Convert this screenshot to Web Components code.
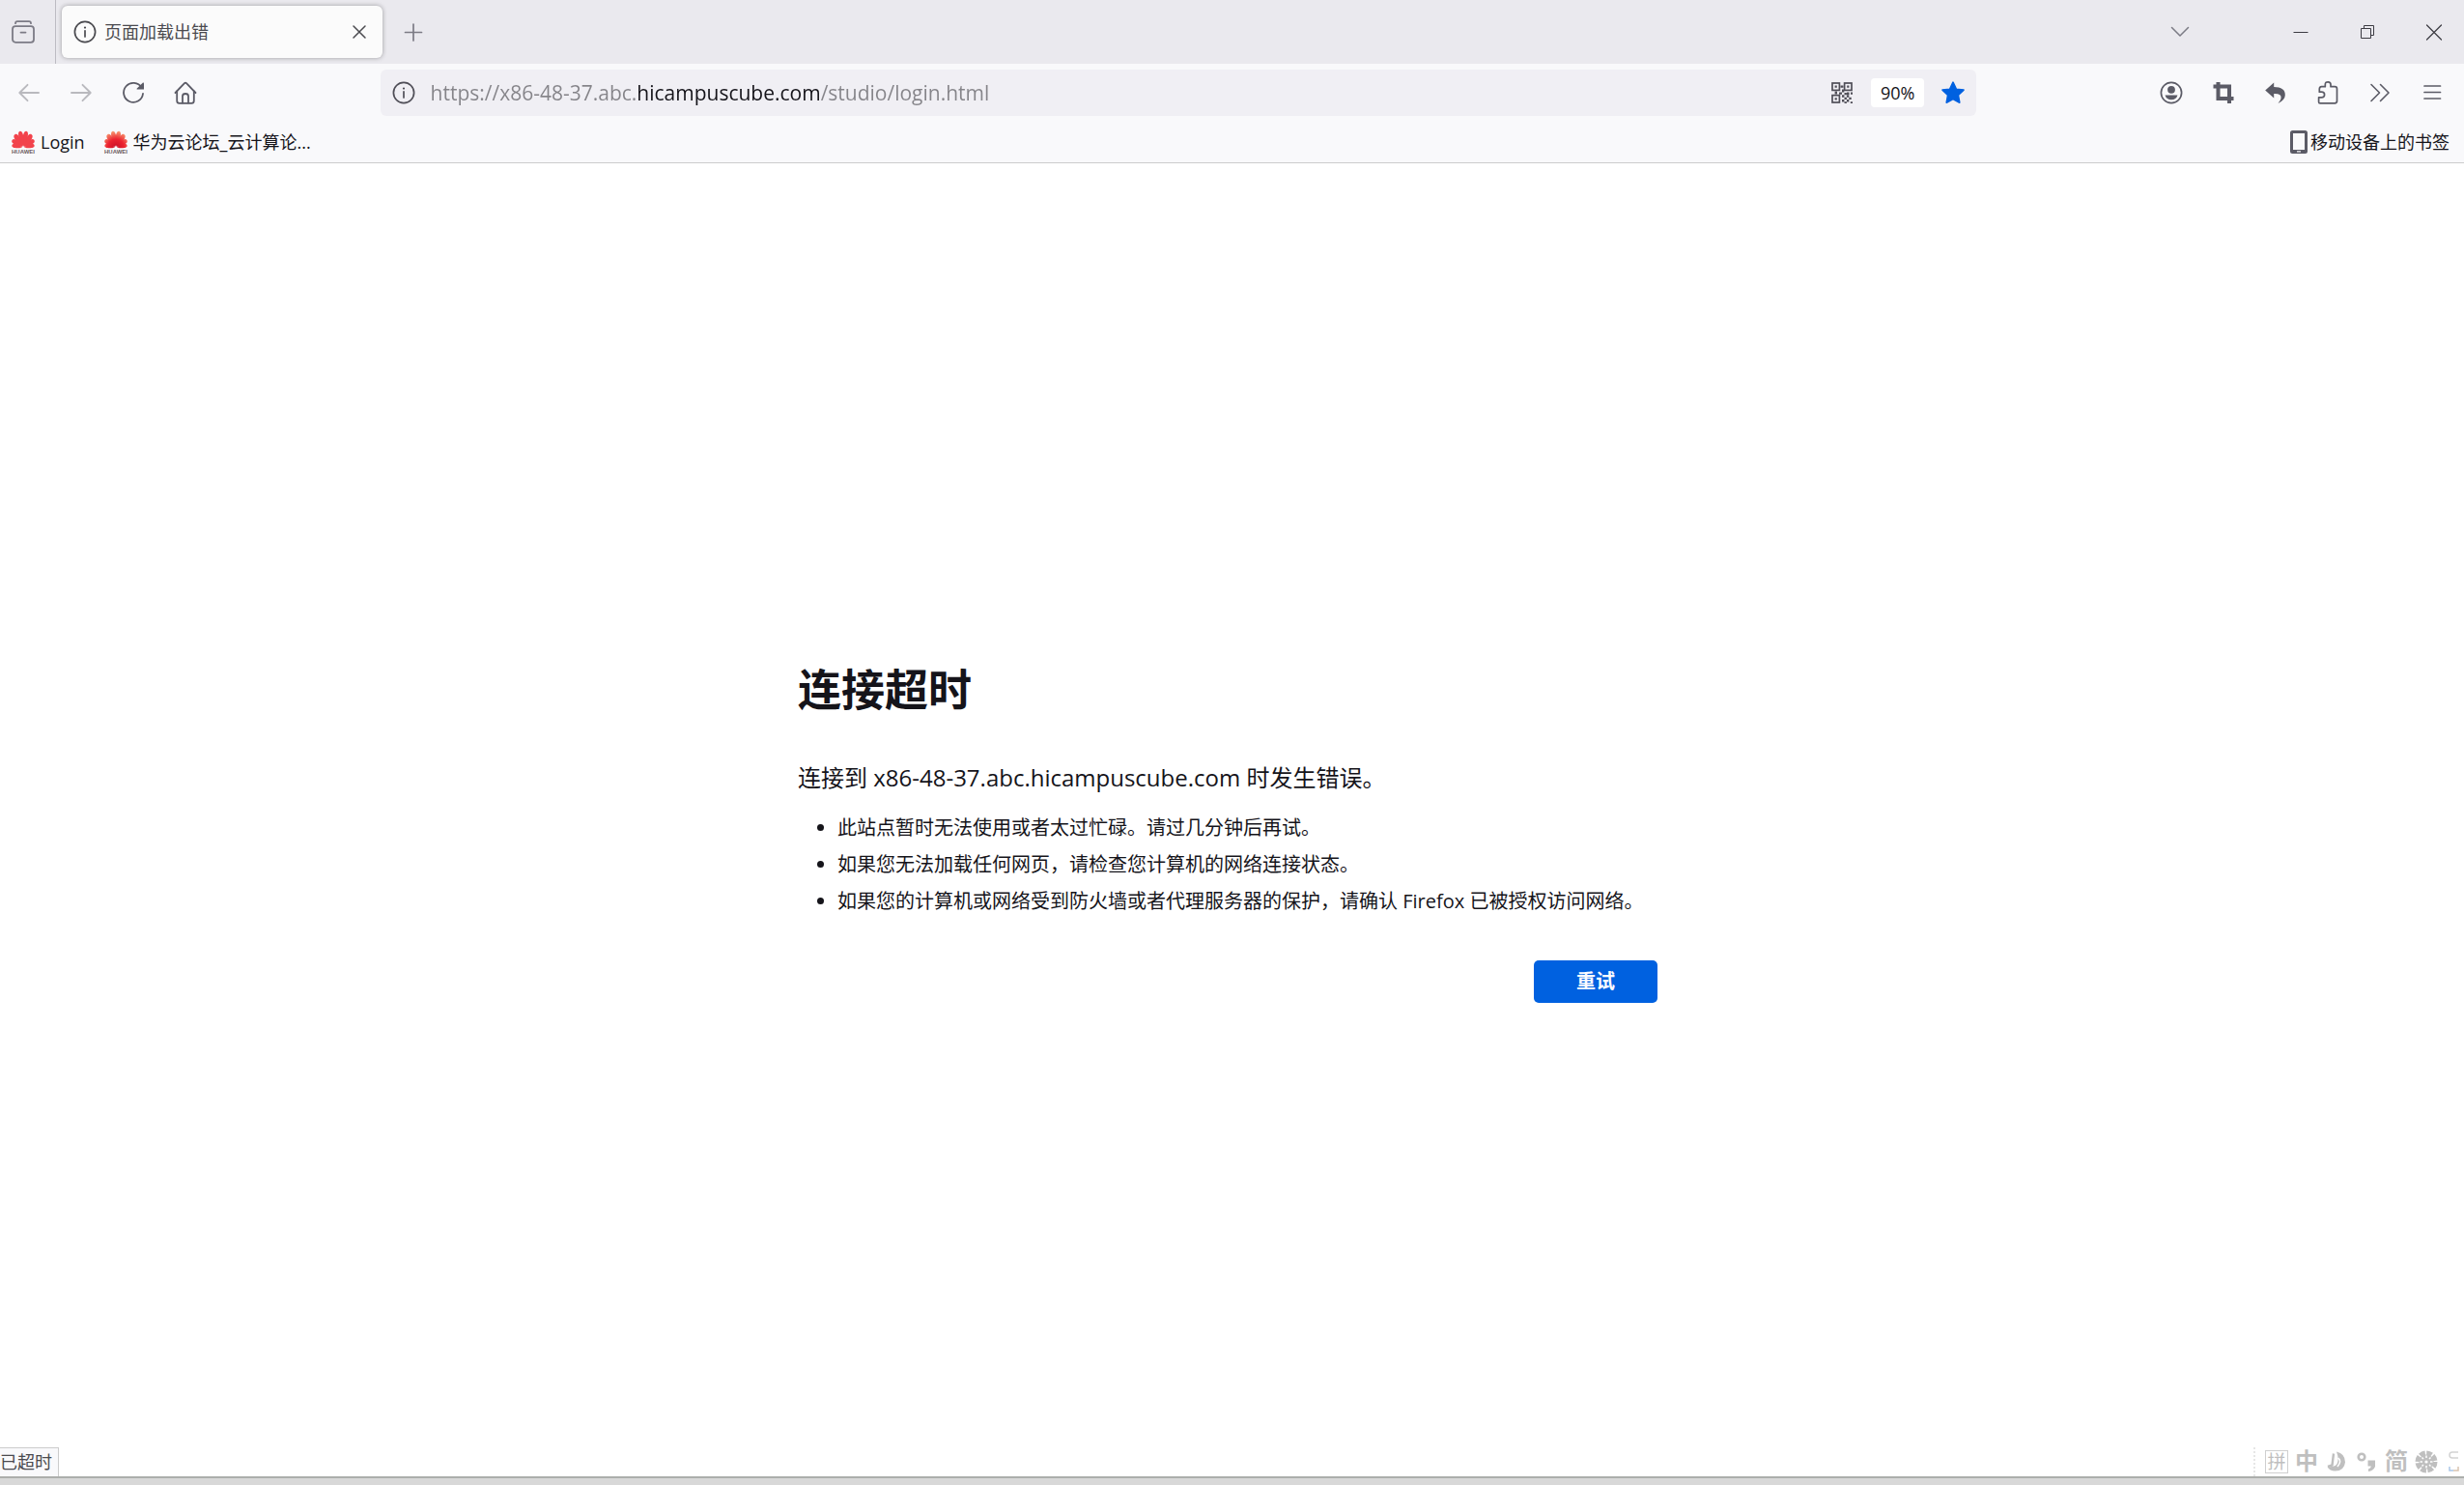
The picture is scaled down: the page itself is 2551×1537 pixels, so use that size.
<!DOCTYPE html>
<html lang="zh-CN">
<head>
<meta charset="utf-8">
<title>页面加载出错</title>
<style>
html,body{margin:0;height:100%}
body{font-family:"Open Sans","Noto Sans CJK SC",sans-serif;font-size:18px;color:#15141a;background:#fff}
</style>
</head>
<body>
<browser-window></browser-window>
<script>
const petals = (fill) => {
  let s = '';
  const spec = [[80,11.8,3],[56,13.8,3.6],[33,16,3.8],[11,17.2,3.6]];
  for (const [a,l,w] of spec) for (const k of [1,-1])
    s += `<path transform="translate(12 17.6) rotate(${a*k})" fill="${fill}" d="M0 -1C${-w*.7} ${-l*.4} ${-w*1.1} ${-l} 0 ${-l}C${w*1.1} ${-l} ${w*.7} ${-l*.4} 0 -1Z"/>`;
  return s;
};
const brand = '<text x="12" y="24" text-anchor="middle" font-family="Liberation Sans" font-weight="700" font-size="6" fill="#6b5a60">HUAWEI</text>';
const line = 'fill="none" stroke="currentColor" stroke-linecap="round" stroke-linejoin="round"';
const ICONS = {
  library: `<g ${line} stroke-width="1.8"><path d="M4 3.2Q4 1.2 6 1.2H18Q20 1.2 20 3.2"/><rect x="1" y="6.2" width="22" height="16.6" rx="3"/><path d="M9.5 12.6H14.5"/></g>`,
  info: `<g ${line} stroke-width="1.7"><circle cx="12" cy="12" r="10.6"/><path d="M12 10.8V17"/></g><circle cx="12" cy="7.6" r="1.1" fill="currentColor"/>`,
  close: `<path ${line} stroke-width="1.5" d="M6 6L18 18M18 6L6 18"/>`,
  plus: `<path ${line} stroke-width="1.7" d="M12 4V21M3.5 12.500H20.5"/>`,
  back: `<path ${line} stroke-width="1.9" d="M22 12H2.5M10.5 3.8L2.3 12L10.5 20.2"/>`,
  forward: `<path ${line} stroke-width="1.9" d="M2 12H21.5M13.5 3.8L21.7 12L13.5 20.2"/>`,
  reload: `<path ${line} stroke-width="1.8" d="M20.6 6.6A10 10 0 1 0 22 13"/><path fill="currentColor" d="M22 1.6Q23 1.2 23 2.4V8.6H16Q15 8.6 15.8 7.6Z"/>`,
  home: `<g ${line} stroke-width="1.8"><path d="M1.5 12L11 2.2Q12 1.2 13 2.2L22.5 12"/><path d="M3.2 10.5V20.2Q3.2 22.8 5.6 22.8H18.4Q20.8 22.8 20.8 20.2V10.5"/><path d="M9 22.5V15.5Q9 13 12 13Q15 13 15 15.5V22.5"/></g>`,
  qr: `<g fill="none" stroke="currentColor" stroke-width="1.7"><rect x="2" y="2" width="7.4" height="7.4"/><rect x="14.6" y="2" width="7.4" height="7.4"/><rect x="2" y="14.6" width="7.4" height="7.4"/></g><path fill="currentColor" d="M4.6 4.6h2.2v2.2H4.6zM17.2 4.6h2.2v2.2h-2.2zM4.6 17.2h2.2v2.2H4.6zM10.5 4.5h3v2.2h-3zM4.6 10.5h2.4v3H4.6zM12 8.5h2.3v3H12zM9 11.5h3v2.3H9zM17 11.5h2.5v2.5H17zM21 11.5h2v2.3h-2zM14.5 12h2.4v2.3h-2.4zM12 14.3h2.4v2.4H12zM16.9 14.3h2.4v2.4h-2.4zM14.5 16.7h2.4v2.3h-2.4zM19.3 16.7h2.4v2.3h-2.4zM12 19h2.4v2.4H12zM16.9 19h2.4v2.4h-2.4zM14.5 21.2h2.4V23h-2.4zM20.8 21.2H23V23h-2.2z"/>`,
  star: `<path fill="currentColor" stroke="currentColor" stroke-width="1.6" stroke-linejoin="round" d="M12 1.2L15.3 8.2L23 9.1L17.4 14.4L18.8 22.2L12 18.5L5.2 22.2L6.6 14.4L1 9.1L8.7 8.2Z"/>`,
  chevron: `<path ${line} stroke-width="1.5" d="M3.5 7.5L12 16L20.5 7.5"/>`,
  minimize: `<path fill="currentColor" d="M4.500 12h15v1h-15z"/>`,
  restore: `<path fill="none" stroke="currentColor" d="M5.500 8.500H15.500V18.500H5.500ZM8.500 8V5.500H18.500V15.500H16"/>`,
  winclose: `<path ${line} stroke-width="1.2" d="M4.500 5L19.500 20M19.500 5L4.500 20"/>`,
  account: `<circle cx="12" cy="12" r="10.6" ${line} stroke-width="1.7"/><circle cx="12" cy="8.800" r="3.900" fill="currentColor"/><path fill="currentColor" d="M5.500 14.500H18.500Q17 19.300 12 19.300Q7 19.300 5.500 14.500Z"/>`,
  crop: `<path fill="none" stroke="currentColor" stroke-width="4" d="M6.500 1V18H22.500M1.500 5.500H18V23"/>`,
  undo: `<path fill="currentColor" d="M1.200 9.500L10.200 1.500V6Q22 6 21.800 14.500Q21.700 19.500 14.500 23Q19.500 17 16.500 14.200Q14.500 12.700 10.200 12.900V17.500Z"/>`,
  puzzle: `<path ${line} stroke-width="1.7" d="M3.300 8.200Q3.300 5.700 5.500 5.700H9.300V3.500Q9.300 .8 12.200 .8Q15 .8 15 3.500V5.700H19.200Q21.500 5.700 21.500 8V20.500Q21.500 22.800 19.200 22.800H4Q2.600 22.800 2.600 21.400V16.800H5.500Q8.600 16.800 8.600 14Q8.600 11.200 5.500 11.200H3.300Z"/>`,
  more: `<path ${line} stroke-width="1.600" d="M3 3.500L11.500 12L3 20.500M12.500 3.500L21 12L12.500 20.500"/>`,
  menu: `<path ${line} stroke-width="1.700" d="M4 5H20.500M4 11.500H20.500M4 18H20.500"/>`,
  phone: `<path fill="currentColor" fill-rule="evenodd" d="M5.500 0H18.500Q21 0 21 2.500V21.500Q21 24 18.500 24H5.500Q3 24 3 21.500V2.500Q3 0 5.500 0ZM6 3V20H18V3ZM10 21.200V22.500H14V21.200Z"/>`,
  huawei: petals('#f2434c') + brand,
  huaweicloud: `<defs><linearGradient id="hw" gradientUnits="userSpaceOnUse" x1="0" y1="-17" x2="0" y2="0"><stop offset="0" stop-color="#f79a72"/><stop offset=".5" stop-color="#ec2330"/><stop offset="1" stop-color="#c80f26"/></linearGradient></defs>` + petals('url(#hw)') + brand,
  moon: `<path fill="currentColor" d="M12 1.500Q21 3.500 21 12.500Q20 21.500 10.500 21.500Q5 21.500 2.500 17Q12.500 18.500 13.500 11Q14 6 12 1.500Z"/><path stroke="currentColor" stroke-width="2.400" fill="none" d="M9 3.500L7.500 15.500L3 17"/><path stroke="#fff" stroke-width="1.600" fill="none" d="M13.500 8Q18 11 13 17"/>`,
  punct: `<circle cx="7" cy="7" r="3.300" fill="none" stroke="currentColor" stroke-width="2.600"/><path fill="currentColor" d="M13.500 10.500H21V17Q19 21.500 14 22V19.500Q17 18.500 16.800 16.500H13.500Z"/>`,
  gear: `<circle cx="12" cy="12" r="9" fill="none" stroke="currentColor" stroke-width="5" stroke-dasharray="5.600 1.460"/><circle cx="12" cy="12" r="7.600" fill="currentColor"/><path stroke="#fff" stroke-width="1.500" fill="none" d="M12 5.500V8M12 16V18.500M5.500 12H8M16 12H18.500M7.500 7.500L9 9M15 15L16.500 16.500M16.500 7.500L15 9M9 15L7.500 16.500"/><circle cx="12" cy="12" r="1.600" fill="#fff"/>`,
  edge: `<g fill="none" stroke-width="1.500"><path stroke="#d3d3d3" d="M14 8H8Q5 8 5 5Q5 2 8 2H14"/><path stroke="#a9c6e8" d="M5 17V21H9"/><path stroke="#d9c3b0" d="M9 21H14V17"/></g>`
};

const define = (tag, html, extra) => {
  const t = document.createElement('template');
  t.innerHTML = html;
  customElements.define(tag, class extends HTMLElement {
    constructor(){ super(); this.attachShadow({mode:'open'}).append(t.content.cloneNode(true)); }
    connectedCallback(){ if (extra) extra(this, this.shadowRoot); }
  });
};

define('ui-icon', `<style>:host{display:block;flex:none;width:24px;height:24px}svg{display:block;width:100%;height:100%;overflow:visible}</style><svg viewBox="0 0 24 24" aria-hidden="true"></svg>`,
  (el, r) => { r.querySelector('svg').innerHTML = ICONS[el.getAttribute('name')]; });

define('tool-button', `<style>
:host{display:flex;flex:none;width:54px;height:48px}
button{all:unset;box-sizing:border-box;width:100%;display:flex;align-items:center;justify-content:center;cursor:default}
</style><button type="button"><slot></slot><ui-icon></ui-icon></button>`,
  (el, r) => { r.querySelector('ui-icon').replaceWith(Object.assign(document.createElement('template'),{innerHTML:`<ui-icon name="${el.getAttribute('icon')}"></ui-icon>`}).content);
    r.querySelector('button').setAttribute('aria-label', el.getAttribute('label')); });

define('browser-tab', `<style>
:host{display:flex;align-items:center;box-sizing:border-box;width:332px;height:54px;padding:0 12px;gap:8px;border-radius:6px;background:#fbfbfb;color:#4a4a4f;box-shadow:0 0 5px #0005}
.label{flex:1;line-height:24px}
button{all:unset;display:flex}
</style><ui-icon name="info"></ui-icon><span class="label"><slot></slot></span><button type="button" aria-label="关闭标签页"><ui-icon name="close"></ui-icon></button>`);

define('tab-strip', `<style>
:host{display:flex;align-items:center;height:66px;background:#eae9ee;color:#7c7b85}
.library{align-self:stretch;display:flex;align-items:center;box-sizing:border-box;width:58px;border-right:1px solid #bcbbc2;margin-right:6px}
.library tool-button{width:48px}
.fill{flex:1}
.window{display:flex;color:#3c3b42;margin-right:-3px}
.window tool-button{width:69px}
.list{margin-right:63px}
.new{margin-left:5px}
</style>
<div class="library"><tool-button icon="library" label="查看浏览记录"></tool-button></div>
<browser-tab>页面加载出错</browser-tab>
<tool-button class="new" icon="plus" label="新建标签页"></tool-button>
<div class="fill"></div>
<tool-button class="list" icon="chevron" label="列出所有标签页"></tool-button>
<div class="window"><tool-button icon="minimize" label="最小化"></tool-button><tool-button icon="restore" label="还原"></tool-button><tool-button icon="winclose" label="关闭"></tool-button></div>`);

define('address-bar', `<style>
:host{display:flex;align-items:center;box-sizing:border-box;height:48px;padding:0 12px;border-radius:6px;background:#f0eff4;color:#4f4e57}
input{all:unset;flex:1;min-width:0;margin-left:16px;height:36px;font-size:21px;line-height:36px;
background:linear-gradient(90deg,#858489 214px,#15141a 214px 404px,#858489 404px);-webkit-background-clip:text;background-clip:text;-webkit-text-fill-color:transparent}
button{all:unset;box-sizing:border-box;display:flex}
.zoom{height:30px;line-height:30px;padding:0 10px;margin:0 18px;border-radius:4px;background:#fff;color:#15141a}
.star{color:#0061e0}
</style>
<ui-icon name="info"></ui-icon>
<input type="text" aria-label="地址" spellcheck="false" value="https://x86-48-37.abc.hicampuscube.com/studio/login.html">
<button type="button" aria-label="二维码"><ui-icon name="qr"></ui-icon></button>
<button type="button" class="zoom">90%</button>
<button type="button" class="star" aria-label="编辑书签"><ui-icon name="star"></ui-icon></button>`);

define('nav-bar', `<style>
:host{display:flex;align-items:center;height:60px;padding:0 6px 0 3px;color:#5b5b66}
.group{display:flex}
.off{color:#b9b9be}
.space{flex:3}
address-bar{flex:28}
</style>
<div class="group"><tool-button class="off" icon="back" label="后退"></tool-button><tool-button class="off" icon="forward" label="前进"></tool-button><tool-button icon="reload" label="刷新"></tool-button><tool-button icon="home" label="主页"></tool-button></div>
<div class="space"></div><address-bar></address-bar><div class="space"></div>
<div class="group"><tool-button icon="account" label="账户"></tool-button><tool-button icon="crop" label="截图"></tool-button><tool-button icon="undo" label="撤销"></tool-button><tool-button icon="puzzle" label="扩展"></tool-button><tool-button icon="more" label="更多工具"></tool-button><tool-button icon="menu" label="应用程序菜单"></tool-button></div>`);

define('bookmark-item', `<style>
:host{display:block}
a{display:flex;align-items:center;gap:var(--gap,6px);color:inherit;text-decoration:none;line-height:24px;white-space:nowrap}
</style><a href="#"><slot name="icon"></slot><span><slot></slot></span></a>`);

define('bookmark-bar', `<style>
:host{display:flex;align-items:center;gap:20px;height:42px;padding:0 15px 0 12px;border-bottom:1px solid #ccc}
.mobile{margin-left:auto;--gap:0px}
.mobile ui-icon{color:#5b5b66}
</style>
<bookmark-item><ui-icon slot="icon" name="huawei"></ui-icon>Login</bookmark-item>
<bookmark-item><ui-icon slot="icon" name="huaweicloud"></ui-icon>华为云论坛_云计算论...</bookmark-item>
<bookmark-item class="mobile"><ui-icon slot="icon" name="phone"></ui-icon>移动设备上的书签</bookmark-item>`);

define('error-page', `<style>
:host{flex:1;display:flex;align-items:center;justify-content:center;padding-top:52px}
section{box-sizing:border-box;width:899px;max-width:100%;padding-right:9px}
h1{margin:0 0 40px;font-size:45px;line-height:66px;font-weight:700}
p{margin:0 0 15px;font-size:24px;line-height:36px}
ul{margin:0 0 42px;padding-left:41px;font-size:20px;line-height:38px}
footer{display:flex;justify-content:flex-end}
button{box-sizing:border-box;width:128px;height:44px;border:0;border-radius:5px;background:#0061e0;color:#fbfbfe;font:700 20px/44px "Open Sans","Noto Sans CJK SC",sans-serif;padding:0}
</style>
<section>
<h1>连接超时</h1>
<p>连接到 x86-48-37.abc.hicampuscube.com 时发生错误。</p>
<ul><li>此站点暂时无法使用或者太过忙碌。请过几分钟后再试。</li><li>如果您无法加载任何网页，请检查您计算机的网络连接状态。</li><li>如果您的计算机或网络受到防火墙或者代理服务器的保护，请确认 Firefox 已被授权访问网络。</li></ul>
<footer><button type="button">重试</button></footer>
</section>`);

define('ime-bar', `<style>
:host{display:flex;align-items:center;gap:7px;color:#bfbfbf;padding-left:10px;border-left:2px dotted #e6e6e6}
button{all:unset;display:flex;justify-content:center;width:24px;height:24px;font-size:24px;line-height:22px;font-weight:700}
.box{box-sizing:border-box;border:1px solid #cfcfcf;font-size:19px;font-weight:400}
</style>
<button type="button" class="box">拼</button><button type="button">中</button><button type="button" aria-label="半角"><ui-icon name="moon"></ui-icon></button><button type="button" aria-label="标点"><ui-icon name="punct"></ui-icon></button><button type="button">简</button><button type="button" aria-label="设置"><ui-icon name="gear"></ui-icon></button><ui-icon name="edge"></ui-icon>`);

define('status-row', `<style>
:host{display:flex;justify-content:space-between;height:30px}
output{box-sizing:border-box;padding-right:6px;border:1px solid #ccc;border-width:1px 1px 0 0;background:#f9f9fb;color:#4a4a4f;line-height:28px}
ime-bar{margin-right:-4px}
</style><output>已超时</output><ime-bar></ime-bar>`);

define('browser-window', `<style>
:host{display:flex;flex-direction:column;min-height:100vh;overflow:hidden}
header{background:#f9f9fb}
.edge{height:7px;border-top:2px solid #acaeac;background:#d8d8d8}
</style>
<header><tab-strip></tab-strip><nav-bar></nav-bar><bookmark-bar></bookmark-bar></header>
<error-page></error-page><status-row></status-row><div class="edge"></div>`);
</script>
</body>
</html>
